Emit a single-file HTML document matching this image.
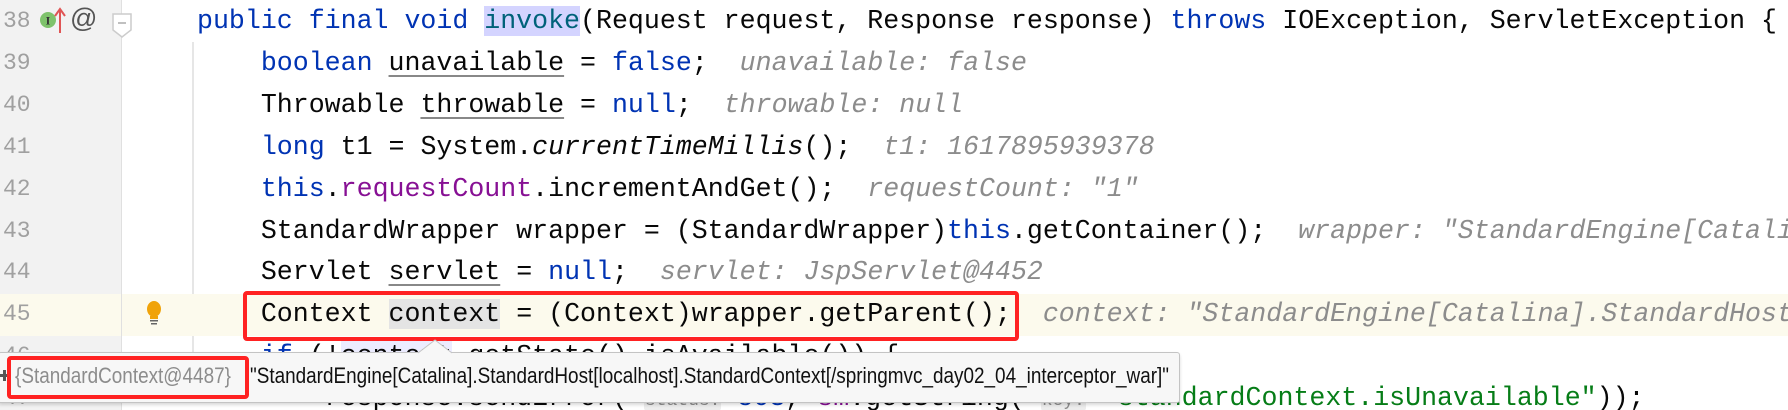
<!DOCTYPE html>
<html><head><meta charset="utf-8"><style>
html,body{margin:0;padding:0;width:1788px;height:410px;overflow:hidden;background:#fff;}
#w{position:absolute;left:0;top:0;width:1788px;height:410px;overflow:hidden}
.m{font-family:"Liberation Mono",monospace;font-size:26.6px;white-space:pre;}
.num{position:absolute;left:3px;font-family:"Liberation Mono",monospace;font-size:23px;color:#a0a0a0;height:41.9px;line-height:41.9px;}
.code{position:absolute;left:197px;height:41.9px;line-height:41.9px;color:#080808;}
.k{color:#0033b3}.f{color:#871094}.h{color:#8c8c8c;font-style:italic}.s{color:#067d17}
.u{text-decoration:underline;text-decoration-color:#888;text-underline-offset:5px}
.it{font-style:italic}
.p{background:#ededed;color:#8c8c8c;font-size:18px;border-radius:3px;padding:0 1px}
.tt{position:absolute;top:361px;font-family:'Liberation Sans',sans-serif;font-size:22px;line-height:30px;white-space:pre;transform-origin:0 0;transform:scaleX(0.86)}
</style></head><body><div id="w">
<div style="position:absolute;left:0;top:0;width:121px;height:410px;background:#f2f2f2"></div>
<div style="position:absolute;left:121px;top:0;width:1px;height:410px;background:#e0e0e0"></div>
<div style="position:absolute;left:192px;top:42px;width:2px;height:360px;background:#e6e6e6"></div>
<div style="position:absolute;left:0;top:294px;width:1788px;height:42px;background:#fcfaed"></div>
<div style="position:absolute;left:121px;top:294px;width:1px;height:42px;background:#e0e0e0"></div>
<svg style="position:absolute;left:110px;top:12px" width="24" height="28"><path d="M3 2H21V18L12 25L3 18Z" fill="#fff" stroke="#ccc" stroke-width="1.5"/><path d="M8 11H16" stroke="#aaa" stroke-width="1.5"/></svg>
<svg style="position:absolute;left:38px;top:6px" width="60" height="30"><circle cx="10" cy="14" r="8" fill="#7ec26b"/><text x="10" y="18.5" font-family="Liberation Serif" font-size="12" font-weight="bold" text-anchor="middle" fill="#333">I</text><path d="M22 27V4M17 10L22 3L27 10" stroke="#e05555" stroke-width="2" fill="none"/></svg>
<div style="position:absolute;left:70px;top:3px;font-family:'Liberation Sans',sans-serif;font-size:27px;color:#555">@</div>
<svg style="position:absolute;left:144px;top:299px" width="20" height="30"><ellipse cx="10" cy="10" rx="7" ry="8" fill="#f0a30a"/><rect x="6" y="17" width="8" height="3" fill="#f0a30a"/><rect x="6" y="21" width="8" height="1.5" fill="#666"/><rect x="7" y="24" width="6" height="1.5" fill="#666"/></svg>

<div class="num" style="top:1px">38</div>
<div class="num" style="top:42.9px">39</div>
<div class="num" style="top:84.8px">40</div>
<div class="num" style="top:126.7px">41</div>
<div class="num" style="top:168.6px">42</div>
<div class="num" style="top:210.5px">43</div>
<div class="num" style="top:252.4px">44</div>
<div class="num" style="top:294.3px">45</div>
<div class="num" style="top:336.2px">46</div>
<div class="num" style="top:378.1px">47</div>

<div class="code m" style="top:1px"><span class="k">public final void </span><span style="background:#d4d4ff;color:#00627a">invoke</span>(Request request, Response response) <span class="k">throws</span> IOException, ServletException {</div>
<div class="code m" style="top:42.9px">    <span class="k">boolean</span> <span class="u">unavailable</span> = <span class="k">false</span>;  <span class="h">unavailable: false</span></div>
<div class="code m" style="top:84.8px">    Throwable <span class="u">throwable</span> = <span class="k">null</span>;  <span class="h">throwable: null</span></div>
<div class="code m" style="top:126.7px">    <span class="k">long</span> t1 = System.<span class="it">currentTimeMillis</span>();  <span class="h">t1: 1617895939378</span></div>
<div class="code m" style="top:168.6px">    <span class="k">this</span>.<span class="f">requestCount</span>.incrementAndGet();  <span class="h">requestCount: "1"</span></div>
<div class="code m" style="top:210.5px">    StandardWrapper wrapper = (StandardWrapper)<span class="k">this</span>.getContainer();  <span class="h">wrapper: "StandardEngine[Catali</span></div>
<div class="code m" style="top:252.4px">    Servlet <span class="u">servlet</span> = <span class="k">null</span>;  <span class="h">servlet: JspServlet@4452</span></div>
<div class="code m" style="top:294.3px">    Context <span style="background:#e4e4e4">context</span> = (Context)wrapper.getParent();  <span class="h">context: "StandardEngine[Catalina].StandardHost</span></div>
<div class="code m" style="top:336.2px">    <span class="k">if</span> (!<span style="background:#ececff">context</span>.getState().isAvailable()) {</div>
<div class="code m" style="top:378.1px">        response.sendError( <span class="p">status:</span> <span class="k">503</span>, <span class="f">sm</span>.getString( <span class="p">key:</span> <span class="s">"standardContext.isUnavailable"</span>));</div>

<div style="position:absolute;left:243px;top:291px;width:768px;height:42px;border:4px solid #f22;border-radius:4px"></div>

<div style="position:absolute;left:-2px;top:352px;width:1180px;height:49px;background:#f7f7f7;border:1px solid #c4c4c4;border-radius:3px;box-shadow:0 2px 3px rgba(0,0,0,.15)"></div>
<svg style="position:absolute;left:418px;top:339px" width="36" height="15"><path d="M0 14L17 1L34 14" fill="#f7f7f7" stroke="#c4c4c4" stroke-width="1"/></svg>
<div style="position:absolute;left:0;top:374px;width:9px;height:3px;background:#555"></div>
<div style="position:absolute;left:3px;top:370px;width:3px;height:11px;background:#555"></div>
<div class="tt" style="left:15px;color:#8c8c8c">{StandardContext@4487}</div>
<div class="tt" style="left:250px;color:#111">"StandardEngine[Catalina].StandardHost[localhost].StandardContext[/springmvc_day02_04_interceptor_war]"</div>
<div style="position:absolute;left:7px;top:356px;width:234px;height:35px;border:4px solid #f22;border-radius:4px"></div>
</div></body></html>
